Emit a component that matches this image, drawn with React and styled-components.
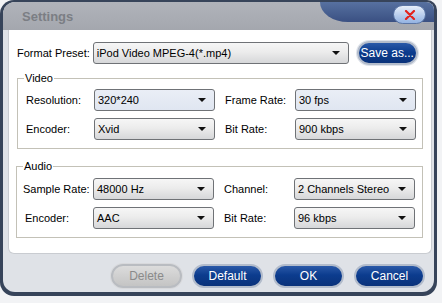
import React from "react";
import styled, { createGlobalStyle } from "styled-components";

const Global = createGlobalStyle`
  html, body {
    margin: 0;
    padding: 0;
    background: #f2f3f5;
  }
  body {
    font-family: "Liberation Sans", Arial, sans-serif;
    font-size: 11px;
  }
`;

const App = () => {
  return (
    <>
      <Global />
      <Window>
        <Inner>
          <TitleBar>
            <Title>Settings</Title>
            <Tab>
              <CloseButton>
                <svg width="12" height="10" viewBox="0 0 12 10">
                  <path
                    d="M2 1 L10 9 M10 1 L2 9"
                    stroke="#e3221c"
                    strokeWidth="2.2"
                    strokeLinecap="round"
                  />
                </svg>
              </CloseButton>
            </Tab>
          </TitleBar>
          <Body>
            <Panel>
              <PresetRow>
                <Label>Format Preset:</Label>
                <Select $width={256}>iPod Video MPEG-4(*.mp4)</Select>
                <SaveButton>Save as...</SaveButton>
              </PresetRow>
              <Group>
                <Legend>Video</Legend>
                <Grid>
                  <Label>Resolution:</Label>
                  <Select $tint>320*240</Select>
                  <Label>Frame Rate:</Label>
                  <Select $tint>30 fps</Select>
                  <Label>Encoder:</Label>
                  <Select>Xvid</Select>
                  <Label>Bit Rate:</Label>
                  <Select>900 kbps</Select>
                </Grid>
              </Group>
              <Group $audio>
                <Legend>Audio</Legend>
                <Grid>
                  <Label $shift={-2}>Sample Rate:</Label>
                  <Select>48000 Hz</Select>
                  <Label>Channel:</Label>
                  <Select>2 Channels Stereo</Select>
                  <Label>Encoder:</Label>
                  <Select>AAC</Select>
                  <Label>Bit Rate:</Label>
                  <Select>96 kbps</Select>
                </Grid>
              </Group>
            </Panel>
            <Footer>
              <PillButton $disabled>Delete</PillButton>
              <PillButton>Default</PillButton>
              <PillButton>OK</PillButton>
              <PillButton>Cancel</PillButton>
            </Footer>
          </Body>
        </Inner>
      </Window>
    </>
  );
};

const Window = styled.div`
  width: 437px;
  height: 296px;
  box-sizing: border-box;
  padding: 2px 3px 4px 3px;
  background: #37445a;
  border-radius: 14px 10px 14px 14px;
  display: flex;
`;

const Inner = styled.div`
  flex: 1;
  display: flex;
  flex-direction: column;
  background: #dfe2e7;
  border-radius: 12px 8px 12px 12px;
  overflow: hidden;
`;

const TitleBar = styled.div`
  height: 28px;
  display: flex;
  align-items: flex-start;
  background: linear-gradient(#b0b3ba, #a4a7ae);
  flex-shrink: 0;
`;

const Title = styled.div`
  flex: 1;
  padding: 7px 0 0 19px;
  font-family: "Liberation Sans", Arial, sans-serif;
  font-weight: bold;
  font-size: 13px;
  color: #7b7e84;
`;

const Tab = styled.div`
  width: 114px;
  height: 20px;
  display: flex;
  align-items: flex-start;
  justify-content: flex-end;
  background: linear-gradient(#5771a0, #3a5082);
  border-bottom-left-radius: 28px 20px;
`;

const CloseButton = styled.div`
  width: 33px;
  height: 19px;
  box-sizing: border-box;
  margin: 3px 8px 0 0;
  border-radius: 10px;
  border: 1px solid #5b76a6;
  background: linear-gradient(#e6eefa, #bcd0ee 50%, #94b3e2);
  display: flex;
  align-items: center;
  justify-content: center;
`;

const Body = styled.div`
  flex: 1;
  display: flex;
  flex-direction: column;
  padding: 0 2px 0 5px;
`;

const Panel = styled.div`
  height: 224px;
  box-sizing: border-box;
  background: #ffffff;
  border: 1px solid #c9ccd1;
  border-top: none;
  border-radius: 0 0 6px 6px;
  padding: 11px 8px 0 8px;
`;

const PresetRow = styled.div`
  display: flex;
  align-items: center;
  gap: 3px;
  height: 24px;
`;

const Label = styled.div`
  color: #000;
  font-size: 11px;
  white-space: nowrap;
  margin-left: ${(p) => p.$shift || 0}px;
`;

const Select = styled.div`
  position: relative;
  width: ${(p) => (p.$width ? `${p.$width}px` : "auto")};
  height: 22px;
  box-sizing: border-box;
  border: 1px solid #6f7276;
  border-radius: 3px;
  background: ${(p) =>
    p.$tint
      ? "linear-gradient(#eaeef6, #e0e6f1)"
      : "linear-gradient(#f6f6f6, #ececec 45%, #d6d7d9)"};
  display: flex;
  align-items: center;
  padding-left: 3px;
  font-size: 11px;
  color: #000;
  white-space: nowrap;
  overflow: hidden;

  &::after {
    content: "";
    position: absolute;
    right: 8px;
    top: 8px;
    border-left: 4px solid transparent;
    border-right: 4px solid transparent;
    border-top: 4px solid #111;
  }
`;

const Group = styled.fieldset`
  margin: ${(p) => (p.$audio ? "11px 0 0 -1px" : "7px 0 0 0")};
  padding: ${(p) => (p.$audio ? "5px 8px 8px 8px" : "4px 8px 8px 8px")};
  border: 1px solid #c3c1b7;
  min-width: 0;
`;

const Legend = styled.legend`
  padding: 0 1px;
  margin-left: -2px;
  font-size: 11px;
  line-height: 13px;
  color: #000;
`;

const Grid = styled.div`
  display: grid;
  grid-template-columns: 58px 121px 60px 121px;
  column-gap: 10px;
  row-gap: 7px;
  align-items: center;
`;

const Footer = styled.div`
  flex: 1;
  display: flex;
  justify-content: flex-end;
  align-items: flex-start;
  gap: 10px;
  padding: 10px 7px 0 0;
`;

const PillButton = styled.div`
  width: ${(p) => p.$width || 71}px;
  height: 24px;
  box-sizing: border-box;
  border-radius: 12px;
  border: 2px solid ${(p) => (p.$disabled ? "#b9bcc1" : "#b3bccb")};
  background: ${(p) =>
    p.$disabled
      ? "linear-gradient(#dcdcdc, #c4c4c4)"
      : "linear-gradient(#2a59a8, #0c3c8e 45%, #0a327a)"};
  color: ${(p) => (p.$disabled ? "#8a8a8a" : "#ffffff")};
  font-size: 12px;
  display: flex;
  align-items: center;
  justify-content: center;
  box-shadow: 0 0 0 1px ${(p) => (p.$disabled ? "#d8d9dc" : "#dfe3ea")};
`;

const SaveButton = styled(PillButton)`
  width: 61px;
  margin-left: 5px;
`;

export default App;
